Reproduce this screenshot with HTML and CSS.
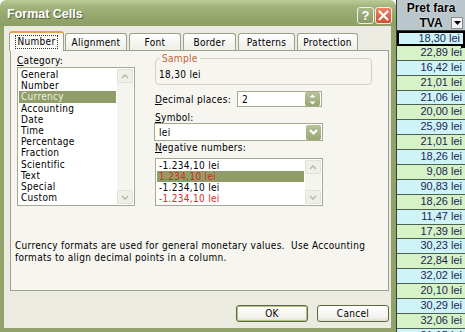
FILE: index.html
```html
<!DOCTYPE html>
<html>
  <head>
    <meta charset="UTF-8">
    <title>Format Cells</title>
    <link rel="stylesheet" href="styles.css">
  </head>
  <body>
    <div class="screen">
      <div class="dialog">
        <div class="titlebar">
          <span class="title">Format Cells</span>
          <div class="title-buttons">
            <span class="tb-btn help">?</span>
            <span class="tb-btn close">
              <svg width="11" height="11" viewBox="0 0 11 11"><path d="M1.5 1.5 L9.5 9.5 M9.5 1.5 L1.5 9.5" stroke="#fff" stroke-width="2.2" stroke-linecap="round"/></svg>
            </span>
          </div>
        </div>
        <div class="dialog-body">
          <div class="tabs">
            <span class="tab active tab-number"><span class="focus">Number</span></span>
            <span class="tab tab-alignment">Alignment</span>
            <span class="tab tab-font">Font</span>
            <span class="tab tab-border">Border</span>
            <span class="tab tab-patterns">Patterns</span>
            <span class="tab tab-protection">Protection</span>
          </div>
          <div class="panel">
            <div class="columns">
              <div class="left">
                <div class="label"><u>C</u>ategory:</div>
                <div class="listbox category">
                  <ul class="items">
                    <li>General</li>
                    <li>Number</li>
                    <li class="selected">Currency</li>
                    <li>Accounting</li>
                    <li>Date</li>
                    <li>Time</li>
                    <li>Percentage</li>
                    <li>Fraction</li>
                    <li>Scientific</li>
                    <li>Text</li>
                    <li>Special</li>
                    <li>Custom</li>
                  </ul>
                  <div class="scrollbar">
                    <span class="sb-btn"><svg width="8" height="5" viewBox="0 0 8 5"><path d="M1 4 L4 1 L7 4" fill="none" stroke="#b8b8ae" stroke-width="1.5"/></svg></span>
                    <span class="sb-btn"><svg width="8" height="5" viewBox="0 0 8 5"><path d="M1 1 L4 4 L7 1" fill="none" stroke="#b8b8ae" stroke-width="1.5"/></svg></span>
                  </div>
                </div>
              </div>
              <div class="right">
                <div class="sample">
                  <span class="legend">Sample</span>
                  <span class="sample-value">18,30 lei</span>
                </div>
                <div class="decimal-row">
                  <span class="label decimal-label"><u>D</u>ecimal places:</span>
                  <div class="input spin-input">
                    <span>2</span>
                    <span class="spinner">
                      <svg width="7" height="4" viewBox="0 0 7 4"><path d="M0.5 3.5 L3.5 0.5 L6.5 3.5 Z" fill="#fff"/></svg>
                      <svg width="7" height="4" viewBox="0 0 7 4"><path d="M0.5 0.5 L3.5 3.5 L6.5 0.5 Z" fill="#fff"/></svg>
                    </span>
                  </div>
                </div>
                <div class="label symbol-label"><u>S</u>ymbol:</div>
                <div class="input select">
                  <span>lei</span>
                  <span class="drop-btn">
                    <svg width="9" height="6" viewBox="0 0 9 6"><path d="M1 1 L4.5 4.5 L8 1" fill="none" stroke="#fff" stroke-width="2"/></svg>
                  </span>
                </div>
                <div class="label negative-label"><u>N</u>egative numbers:</div>
                <div class="listbox negative">
                  <ul class="items">
                    <li>-1.234,10 lei</li>
                    <li class="selected red">1.234,10 lei</li>
                    <li>-1.234,10 lei</li>
                    <li class="red">-1.234,10 lei</li>
                  </ul>
                  <div class="scrollbar">
                    <span class="sb-btn"><svg width="8" height="5" viewBox="0 0 8 5"><path d="M1 4 L4 1 L7 4" fill="none" stroke="#b8b8ae" stroke-width="1.5"/></svg></span>
                    <span class="sb-btn"><svg width="8" height="5" viewBox="0 0 8 5"><path d="M1 1 L4 4 L7 1" fill="none" stroke="#b8b8ae" stroke-width="1.5"/></svg></span>
                  </div>
                </div>
              </div>
            </div>
            <p class="description">Currency formats are used for general monetary values.&nbsp; Use Accounting<br>formats to align decimal points in a column.</p>
          </div>
          <div class="buttons">
            <button class="btn default">OK</button>
            <button class="btn">Cancel</button>
          </div>
        </div>
      </div>
      <div class="sheet">
        <div class="sheet-header">
          <span>Pret fara</span>
          <span>TVA</span>
          <span class="filter-btn"><svg width="7" height="4" viewBox="0 0 7 4"><path d="M0 0 L7 0 L3.5 4 Z" fill="#000"/></svg></span>
        </div>
        <div class="cell cyan active-cell">18,30 lei</div>
        <div class="cell green">22,89 lei</div>
        <div class="cell cyan">16,42 lei</div>
        <div class="cell green">21,01 lei</div>
        <div class="cell cyan">21,06 lei</div>
        <div class="cell green">20,00 lei</div>
        <div class="cell cyan">25,99 lei</div>
        <div class="cell green">21,01 lei</div>
        <div class="cell cyan">18,26 lei</div>
        <div class="cell green">9,08 lei</div>
        <div class="cell cyan">90,83 lei</div>
        <div class="cell green">18,26 lei</div>
        <div class="cell cyan">11,47 lei</div>
        <div class="cell green">17,39 lei</div>
        <div class="cell cyan">30,23 lei</div>
        <div class="cell green">22,84 lei</div>
        <div class="cell cyan">32,02 lei</div>
        <div class="cell green">20,10 lei</div>
        <div class="cell cyan">30,29 lei</div>
        <div class="cell green">32,06 lei</div>
        <div class="cell cyan">31,15 lei</div>
      </div>
    </div>
  </body>
</html>
```

FILE: styles.css
```css
body {
  margin: 0;
  overflow: hidden;
  font-family: "DejaVu Sans Condensed", "Liberation Sans", sans-serif;
  font-size: 10px;
  letter-spacing: 0.3px;
  color: #000;
}

.screen {
  display: flex;
  width: 465px;
  height: 332px;
  overflow: hidden;
}

/* dialog window */

.dialog {
  width: 396px;
  height: 332px;
  flex: none;
  display: flex;
  flex-direction: column;
}

.titlebar {
  height: 26px;
  flex: none;
  display: flex;
  align-items: center;
  justify-content: space-between;
  padding: 0 4px 0 7px;
  background: linear-gradient(#bccb98 0%, #a2b47b 25%, #93a66c 65%, #8c9e64 100%);
  border-radius: 6px 6px 0 0;
}

.title {
  font-family: "Liberation Sans", Arial, sans-serif;
  font-weight: bold;
  font-size: 12.5px;
  letter-spacing: normal;
  color: #fff;
  text-shadow: 1px 1px 0 #56613a;
  margin-top: 1px;
}

.title-buttons {
  display: flex;
  gap: 1px;
  margin-top: 4px;
}

.tb-btn {
  width: 17px;
  height: 17px;
  box-sizing: border-box;
  border: 1px solid #eef0e4;
  border-radius: 3px;
  display: flex;
  align-items: center;
  justify-content: center;
}

.help {
  background: linear-gradient(#a9b689, #8c9a67);
  color: #fff;
  font-family: "Liberation Sans", Arial, sans-serif;
  font-weight: bold;
  font-size: 13px;
}

.close {
  background: linear-gradient(#e8846a, #d2502c);
}

.dialog-body {
  flex: 1;
  background: #ecebe1;
  border-left: 4px solid #91a36b;
  border-right: 5px solid #91a36b;
  border-bottom: 4px solid #91a36b;
  padding: 5px 2px 0 6px;
}

/* tabs */

.tabs {
  display: flex;
  align-items: flex-end;
  gap: 2px;
  height: 19px;
}

.tab {
  height: 17px;
  box-sizing: border-box;
  border: 1px solid #9aa38a;
  border-bottom: none;
  border-radius: 3px 3px 0 0;
  background: linear-gradient(#fefefe, #efeee7);
  display: flex;
  align-items: center;
  justify-content: center;
}

.tab-number { width: 53px; }
.tab-alignment { width: 62px; }
.tab-font { width: 52px; }
.tab-border { width: 53px; }
.tab-patterns { width: 57px; }
.tab-protection { width: 61px; }

.tab.active {
  height: 20px;
  margin: 0 -1px -1px -1px;
  width: 55px;
  background: #fbfbf8;
  border-top: 2px solid #e7a04c;
  position: relative;
  z-index: 1;
}

.focus {
  border: 1px dotted #333;
  padding: 0 2px;
  line-height: 12px;
}

.panel {
  height: 241px;
  box-sizing: border-box;
  border: 1px solid #9aa38a;
  background: #f6f5f0;
  padding: 4px 6px 0 6px;
}

.columns {
  display: flex;
  gap: 20px;
}

.label {
  line-height: 11px;
  height: 11px;
  white-space: nowrap;
}

.left {
  width: 118px;
}

.listbox {
  display: flex;
  border: 1px solid #a5ab91;
  background: #fff;
  box-sizing: border-box;
}

.category {
  height: 139px;
  margin-top: 1px;
  padding: 1px;
}

.items {
  list-style: none;
  margin: 0;
  padding: 0;
  flex: 1;
}

.items li {
  height: 11.2px;
  line-height: 11.2px;
  padding-left: 2px;
  white-space: nowrap;
}

.items li.selected {
  background: #919d69;
  color: #eef0e2;
}

.items li.red {
  color: #e0281e;
}

.scrollbar {
  width: 16px;
  margin-left: 1px;
  background: #f5f4ee;
  display: flex;
  flex-direction: column;
  justify-content: space-between;
}

.sb-btn {
  height: 14px;
  box-sizing: border-box;
  border: 1px solid #e2e1d6;
  border-radius: 2px;
  background: #f1f0e8;
  display: flex;
  align-items: center;
  justify-content: center;
}

.right {
  width: 217px;
}

.sample {
  margin-top: 3px;
  height: 27px;
  box-sizing: border-box;
  border: 1px solid #d2d1c0;
  border-radius: 4px;
  display: flex;
  flex-direction: column;
  align-items: flex-start;
}

.legend {
  margin: -5px 0 0 4px;
  padding: 0 2px;
  background: #f6f5f0;
  color: #c06434;
  line-height: 10px;
}

.sample-value {
  margin: 5px 0 0 3px;
  line-height: 11px;
}

.decimal-row {
  display: flex;
  align-items: center;
  margin-top: 6px;
}

.decimal-label {
  width: 82px;
}

.input {
  height: 16px;
  box-sizing: border-box;
  border: 1px solid #a5ab91;
  background: #fff;
  display: flex;
  align-items: center;
  justify-content: space-between;
  padding: 0 1px 0 4px;
}

.spin-input {
  width: 85px;
}

.spinner {
  width: 15px;
  height: 14px;
  border-radius: 2px;
  background: linear-gradient(#b8c39a, #98a671);
  display: flex;
  flex-direction: column;
  align-items: center;
  justify-content: space-around;
}

.symbol-label {
  margin-top: 5px;
}

.select {
  width: 169px;
  height: 18px;
  margin-left: -1px;
}

.drop-btn {
  width: 15px;
  height: 15px;
  border-radius: 2px;
  background: linear-gradient(#b8c39a, #98a671);
  display: flex;
  align-items: center;
  justify-content: center;
}

.negative-label {
  margin-top: 1px;
}

.negative {
  width: 168px;
  height: 48px;
  margin-top: 5px;
  padding: 1px;
}

.negative .items li {
  height: 11px;
  line-height: 11px;
}

.description {
  margin: 34px 0 0 -2px;
  line-height: 11.5px;
  white-space: nowrap;
}

.buttons {
  display: flex;
  justify-content: flex-end;
  gap: 9px;
  margin-top: 14px;
}

.btn {
  width: 72px;
  height: 17px;
  box-sizing: border-box;
  border: 1px solid #5e6a3c;
  border-radius: 3px;
  background: linear-gradient(#ffffff, #f1f0ea 80%, #dedcd0);
  font-family: inherit;
  font-size: 10px;
  letter-spacing: 0.3px;
  padding: 0;
  color: #000;
}

.btn.default {
  box-shadow: inset 0 0 0 1px #b0c485;
}

/* worksheet column */

.sheet {
  flex: 1;
  border-left: 1px solid #3c3c3c;
  font-family: "Liberation Sans", Arial, sans-serif;
  letter-spacing: normal;
}

.sheet-header {
  height: 31px;
  box-sizing: border-box;
  position: relative;
  background-color: #e2eaec;
  background-image: radial-gradient(#8a9ca4 0.6px, transparent 0.8px);
  background-size: 2px 2px;
  display: flex;
  flex-direction: column;
  align-items: center;
  padding-top: 1px;
  font-weight: bold;
  font-size: 12px;
  line-height: 15px;
  text-shadow: 0 0 2px #fff;
  border-bottom: 1px solid #3c3c3c;
}

.filter-btn {
  position: absolute;
  right: 2px;
  top: 17px;
  width: 12px;
  height: 12px;
  box-sizing: border-box;
  border: 1px solid #8c8c8c;
  background: #f4f4f4;
  display: flex;
  align-items: center;
  justify-content: center;
}

.cell {
  height: 14.9px;
  box-sizing: border-box;
  border-bottom: 1px solid #506050;
  text-align: right;
  padding-right: 3px;
  font-size: 11px;
  line-height: 13px;
  color: #1c1f52;
}

.cyan { background: #cef4f8; }
.green { background: #d5f3c6; }

.active-cell {
  position: relative;
  border: 2px solid #000;
  line-height: 11px;
}

.active-cell::after {
  content: "";
  position: absolute;
  right: -2px;
  bottom: -4px;
  width: 4px;
  height: 4px;
  background: #000;
}
```
